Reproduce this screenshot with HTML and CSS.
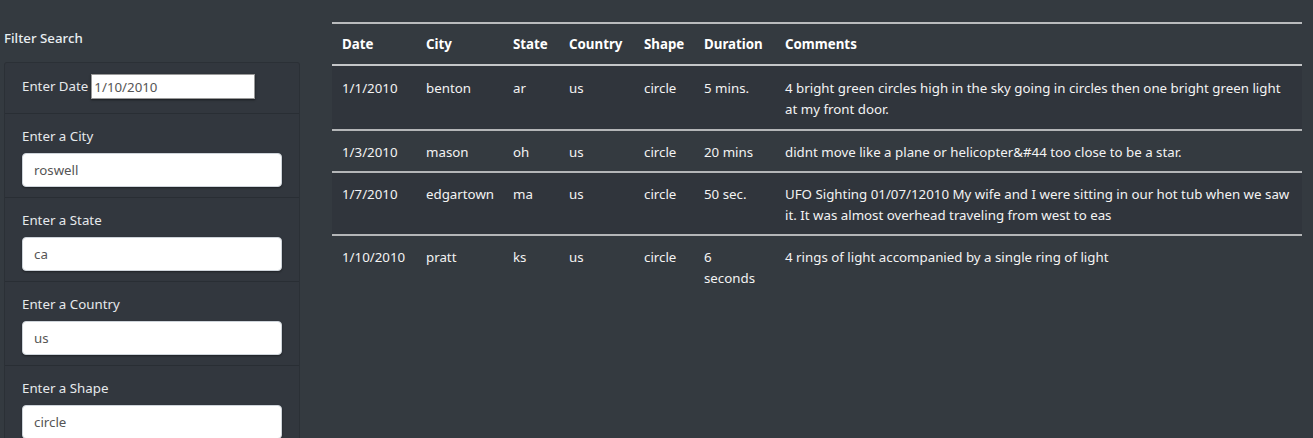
FILE: index.html
```html
<!DOCTYPE html>
<html>
<head>
<meta charset="utf-8">
<link rel="stylesheet" href="styles.css">
</head>
<body>
<div class="page">
  <aside class="filters">
    <div class="filter-title">Filter Search</div>
    <ul class="filter-list">
      <li class="filter-item inline">
        <label>Enter Date</label>
        <input class="date-input" type="text" value="1/10/2010">
      </li>
      <li class="filter-item">
        <label>Enter a City</label>
        <input class="field" type="text" value="roswell">
      </li>
      <li class="filter-item">
        <label>Enter a State</label>
        <input class="field" type="text" value="ca">
      </li>
      <li class="filter-item">
        <label>Enter a Country</label>
        <input class="field" type="text" value="us">
      </li>
      <li class="filter-item">
        <label>Enter a Shape</label>
        <input class="field" type="text" value="circle">
      </li>
    </ul>
  </aside>
  <main class="results">
    <table class="ufo">
      <thead>
        <tr>
          <th class="c-date">Date</th>
          <th class="c-city">City</th>
          <th class="c-state">State</th>
          <th class="c-country">Country</th>
          <th class="c-shape">Shape</th>
          <th class="c-dur">Duration</th>
          <th class="c-com">Comments</th>
        </tr>
      </thead>
      <tbody>
        <tr>
          <td>1/1/2010</td><td>benton</td><td>ar</td><td>us</td><td>circle</td><td>5 mins.</td>
          <td class="c-com">4 bright green circles high in the sky going in circles then one bright green light at my front door.</td>
        </tr>
        <tr>
          <td>1/3/2010</td><td>mason</td><td>oh</td><td>us</td><td>circle</td><td>20 mins</td>
          <td class="c-com">didnt move like a plane or helicopter&amp;#44 too close to be a star.</td>
        </tr>
        <tr>
          <td>1/7/2010</td><td>edgartown</td><td>ma</td><td>us</td><td>circle</td><td>50 sec.</td>
          <td class="c-com">UFO Sighting 01/07/12010 My wife and I were sitting in our hot tub when we saw it. It was almost overhead traveling from west to eas</td>
        </tr>
        <tr>
          <td>1/10/2010</td><td>pratt</td><td>ks</td><td>us</td><td>circle</td><td>6 seconds</td>
          <td class="c-com">4 rings of light accompanied by a single ring of light</td>
        </tr>
      </tbody>
    </table>
  </main>
</div>
</body>
</html>
```

FILE: styles.css
```css
* { box-sizing: border-box; }
html, body {
  margin: 0;
  padding: 0;
  background: #343a40;
  color: #f2f2f2;
  font-family: "Noto Sans", "Open Sans", sans-serif;
  font-size: 13.3px;
  line-height: 21px;
}
.page {
  display: flex;
  align-items: flex-start;
  height: 438px;
  overflow: hidden;
}
.filters {
  width: 300px;
  padding-left: 4px;
  padding-top: 28px;
  flex: none;
}
.filter-title {
  font-weight: 500;
  color: #e8eef2;
  line-height: 21px;
  margin-bottom: 13px;
}
.filter-list {
  list-style: none;
  margin: 0;
  padding: 0;
  border: 1px solid rgba(0,0,0,0.12);
  border-radius: 3px;
  background: #32373e;
}
.filter-item {
  padding: 12px 17px 10px 17px;
  border-bottom: 1px solid rgba(0,0,0,0.16);
  display: flex;
  flex-direction: column;
}
.filter-item label {
  color: #e6e9ec;
  line-height: 21px;
  margin-bottom: 6px;
}
.filter-item.inline {
  flex-direction: row;
  align-items: center;
  padding: 11px 17px 14px 17px;
}
.filter-item.inline label {
  margin: 0 3px 0 0;
}
.date-input {
  width: 164px;
  height: 25px;
  border: 1px solid #999;
  box-shadow: 0 1px 2px rgba(0,0,0,0.5);
  font: inherit;
  color: #555;
  padding: 0 2px;
  background: #fff;
}
.field {
  width: 260px;
  height: 34px;
  border: 1px solid #ced4da;
  border-radius: 4px;
  box-shadow: 0 1px 2px rgba(0,0,0,0.4);
  background: #fff;
  font: inherit;
  color: #555;
  padding: 0 11px;
}
.results {
  flex: 1;
  padding: 22px 11px 0 32px;
}
.ufo {
  width: 100%;
  table-layout: fixed;
  border-collapse: collapse;
  border-top: 2px solid #b9bbbd;
}
.ufo th {
  text-align: left;
  font-weight: 700;
  padding: 10px 10px 9px 10px;
  border-bottom: 2px solid #c4c6c8;
  color: #fff;
}
.ufo td {
  padding: 11px 10px 8px 10px;
  vertical-align: top;
  border-top: 2px solid #b4b6b8;
  color: #f3f3f3;
}
.ufo .c-com { padding-right: 9px; }
.ufo tbody tr:first-child td { border-top: 1px solid #1e2226; padding-top: 12px; padding-bottom: 9px; }
.ufo tbody tr:nth-child(odd) { background: #30353c; }
.c-date { width: 84px; }
.c-city { width: 87px; }
.c-state { width: 56px; }
.c-country { width: 75px; }
.c-shape { width: 60px; }
.c-dur { width: 81px; }
```
